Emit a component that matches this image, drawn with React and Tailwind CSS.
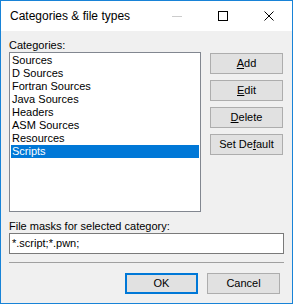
import { useState } from 'react';

const categories = [
  'Sources',
  'D Sources',
  'Fortran Sources',
  'Java Sources',
  'Headers',
  'ASM Sources',
  'Resources',
  'Scripts',
];

const font = { fontFamily: '"Liberation Sans", Arial, sans-serif' };

function DlgButton({ children, primary }) {
  return (
    <button
      className={`h-[21px] w-[73px] bg-[#e1e1e1] text-[11px] leading-none text-black flex items-center justify-center ${
        primary ? 'border-2 border-[#0078d7]' : 'border border-[#adadad]'
      }`}
    >
      {children}
    </button>
  );
}

export default function App() {
  const [selected, setSelected] = useState(7);

  return (
    <div
      className="w-[293px] h-[304px] border border-[#1883d7] flex flex-col bg-[#f0f0f0] text-black"
      style={font}
    >
      {/* Title bar */}
      <div className="h-[30px] bg-white flex items-center">
        <span className="pl-[9px] text-[12px] flex-1">Categories &amp; file types</span>
        <div className="flex items-center h-full">
          <div className="w-[46px] h-full flex items-center justify-center">
            <div className="w-[10px] h-px bg-[#cccccc]" />
          </div>
          <div className="w-[46px] h-full flex items-center justify-center">
            <div className="w-[10px] h-[10px] border border-black" />
          </div>
          <div className="w-[46px] h-full flex items-center justify-center">
            <svg width="10" height="10" viewBox="0 0 10 10">
              <path d="M0.5 0.5L9.5 9.5M9.5 0.5L0.5 9.5" stroke="#000" strokeWidth="1" />
            </svg>
          </div>
        </div>
      </div>

      {/* Body */}
      <div className="flex-1 px-[8px] pt-[8px] text-[11px] leading-[13px]">
        <div>Categories:</div>
        <div className="flex">
          <div className="w-[192px] h-[160px] bg-white border border-[#828790] p-[1px]">
            {categories.map((c, i) => (
              <div
                key={c}
                onClick={() => setSelected(i)}
                className={`h-[13px] pl-[1px] leading-[13px] ${
                  i === selected ? 'bg-[#0078d7] text-white' : ''
                }`}
              >
                {c}
              </div>
            ))}
          </div>
          <div className="ml-[9px] mt-[1px] flex flex-col gap-[6px]">
            <DlgButton><span className="underline">A</span>dd</DlgButton>
            <DlgButton><span className="underline">E</span>dit</DlgButton>
            <DlgButton><span className="underline">D</span>elete</DlgButton>
            <DlgButton>Set De<span className="underline">f</span>ault</DlgButton>
          </div>
        </div>

        <div className="mt-[8px]">File masks for selected category:</div>
        <div className="h-[21px] bg-white border border-[#7a7a7a] flex items-center pl-[2px]">
          *.script;*.pwn;
        </div>

        <div className="mt-[8px] h-px bg-[#a0a0a0]" />

        <div className="mt-[10px] flex justify-end gap-[9px] pr-[4px]">
          <DlgButton primary>OK</DlgButton>
          <DlgButton>Cancel</DlgButton>
        </div>
      </div>
    </div>
  );
}
